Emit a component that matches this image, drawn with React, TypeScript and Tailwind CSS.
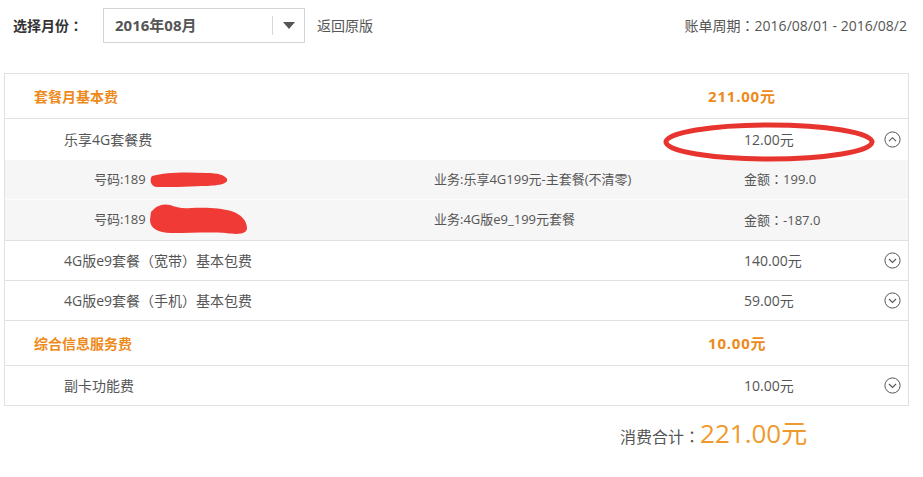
import React from "react";

const font = { fontFamily: '"Open Sans", "Noto Sans CJK SC", sans-serif' };

// fullwidth colon drawn centred, as the original page's font does
function Colon() {
  return <span className="font-['Noto_Sans_CJK_TC',sans-serif]">：</span>;
}

function CircleChevron({ up }: { up?: boolean }) {
  return (
    <svg width="17" height="17" viewBox="0 0 17 17" fill="none">
      <circle cx="8.5" cy="8.5" r="7.6" stroke="#555" strokeWidth="1" />
      {up ? (
        <path d="M5 10.2 L8.5 6.7 L12 10.2" stroke="#555" strokeWidth="1.1" />
      ) : (
        <path d="M5 7 L8.5 10.5 L12 7" stroke="#555" strokeWidth="1.1" />
      )}
    </svg>
  );
}

function SectionRow({ label, amount }: { label: string; amount: string }) {
  return (
    <div className="grid grid-cols-[703px_1fr] items-center h-[45px] border-b border-[#e1e1e1]">
      <div className="pl-[29px] text-[14px] font-bold text-[#ee8a1c]">{label}</div>
      <div className="text-[15px] font-bold tracking-[0.8px] text-[#ee8a1c]">{amount}</div>
    </div>
  );
}

function ItemRow({
  label,
  amount,
  up,
  h = "h-[40px]",
  border = true,
}: {
  label: string;
  amount: string;
  up?: boolean;
  h?: string;
  border?: boolean;
}) {
  return (
    <div
      className={`grid grid-cols-[739px_140px_1fr] items-center ${h} ${border ? "border-b border-[#e1e1e1]" : ""}`}
    >
      <div className="pl-[59px] text-[14px] text-[#555]">{label}</div>
      <div className="text-[14px] text-[#555]">{amount}</div>
      <div className="flex items-center">
        <CircleChevron up={up} />
      </div>
    </div>
  );
}

function SubRow({
  num,
  biz,
  amount,
  divider,
}: {
  num: string;
  biz: string;
  amount: string;
  divider?: boolean;
}) {
  return (
    <div
      className={`grid grid-cols-[429px_310px_1fr] items-center h-[40px] bg-[#f6f6f6] ${divider ? "border-b border-[#fdfdfd]" : ""}`}
    >
      <div className="pl-[89px] text-[13px] text-[#555]">{num}</div>
      <div className="text-[13px] text-[#555]">{biz}</div>
      <div className="text-[13px] text-[#555]">
        金额<Colon />
        {amount}
      </div>
    </div>
  );
}

export default function App() {
  return (
    <div className="relative w-[923px] h-[477px] bg-white overflow-hidden" style={font}>
      {/* Top bar */}
      <div className="flex items-center pt-[8px] h-[43px]">
        <div className="pl-[13px] w-[103px] text-[14px] font-bold text-[#333]">
          选择月份<Colon />
        </div>
        <div className="flex items-center w-[202px] h-[35px] border border-[#d3d3d3] bg-white">
          <div className="flex-1 pl-[11px] text-[15px] font-bold text-[#555]">2016年08月</div>
          <div className="w-px h-[19px] bg-[#d6d6d6]" />
          <div className="w-[31px] flex justify-center">
            <svg width="12" height="7" viewBox="0 0 12 7">
              <path d="M0 0 H12 L6 7 Z" fill="#555" />
            </svg>
          </div>
        </div>
        <div className="ml-[12px] text-[14px] text-[#555]">返回原版</div>
        <div className="ml-auto pr-[16px] text-[14px] text-[#555] whitespace-nowrap">
          账单周期<Colon />2016/08/01 - 2016/08/2
        </div>
      </div>

      {/* Bill table */}
      <div className="mt-[30px] ml-[4px] w-[905px] border border-[#e1e1e1]">
        <SectionRow label="套餐月基本费" amount="211.00元" />
        <ItemRow label="乐享4G套餐费" amount="12.00元" up h="h-[41px]" border={false} />
        <SubRow num="号码:189" biz="业务:乐享4G199元-主套餐(不清零)" amount="199.0" divider />
        <div className="border-b border-[#e1e1e1]">
          <SubRow num="号码:189" biz="业务:4G版e9_199元套餐" amount="-187.0" />
        </div>
        <ItemRow label="4G版e9套餐（宽带）基本包费" amount="140.00元" />
        <ItemRow label="4G版e9套餐（手机）基本包费" amount="59.00元" />
        <SectionRow label="综合信息服务费" amount="10.00元" />
        <ItemRow label="副卡功能费" amount="10.00元" h="h-[39px]" border={false} />
      </div>

      {/* Total */}
      <div className="flex items-baseline pl-[620px] mt-[14px]">
        <span className="text-[16px] text-[#555]">
          消费合计<Colon />
        </span>
        <span className="text-[26px] text-[#f09a2e] leading-none">221.00元</span>
      </div>

      {/* Red annotations */}
      <svg className="absolute left-[650px] top-[115px]" width="240" height="55" viewBox="0 0 240 55" fill="none">
        <ellipse cx="119" cy="27" rx="103" ry="17" stroke="#e8342f" strokeWidth="5" />
      </svg>
      <svg className="absolute left-[147px] top-[168px]" width="90" height="24" viewBox="0 0 90 24">
        <path
          d="M5 8 C18 4 40 4 60 5 C70 5 78 7 80 11 C82 16 70 18 55 18 C40 19 20 19 10 19 C4 19 2 12 5 8 Z"
          fill="#f03a36"
        />
      </svg>
      <svg className="absolute left-[146px] top-[200px]" width="110" height="40" viewBox="0 0 110 40">
        <path
          d="M5 12 C10 6 16 3 24 5 C30 7 36 9 45 8 C60 7 75 8 85 11 C95 14 101 21 101 28 C101 34 92 35 80 33 C65 32 45 33 25 33 C12 33 4 28 4 20 Z"
          fill="#f03a36"
        />
      </svg>
    </div>
  );
}
